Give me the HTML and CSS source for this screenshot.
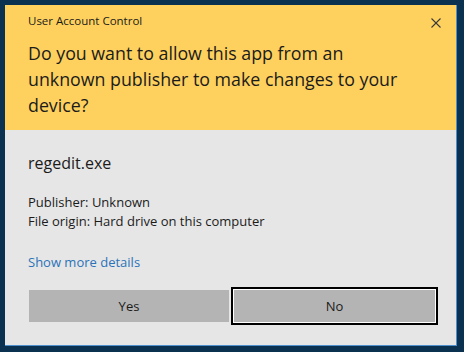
FILE: index.html
```html
<!DOCTYPE html>
<html lang="en">
<head>
    <meta charset="UTF-8">
    <meta name="viewport" content="width=device-width, initial-scale=1.0">
    <title>User Account Control</title>
    <link rel="stylesheet" href="styles.css">
</head>
<body>
    <div class="uac-dialog">
        <div class="uac-header">
            <div class="title-row">
                <span class="caption">User Account Control</span>
                <div class="close-btn">
                    <svg viewBox="0 0 10 10">
                        <line x1="0.5" y1="0.5" x2="9.5" y2="9.5"></line>
                        <line x1="9.5" y1="0.5" x2="0.5" y2="9.5"></line>
                    </svg>
                </div>
            </div>
            <h1 class="question">Do you want to allow this app from an<br>unknown publisher to make changes to your<br>device?</h1>
        </div>
        <div class="uac-body">
            <div class="app-name">regedit.exe</div>
            <div class="app-info">
                <div>Publisher: Unknown</div>
                <div>File origin: Hard drive on this computer</div>
            </div>
            <a class="details-link" href="#">Show more details</a>
            <div class="buttons">
                <button class="btn">Yes</button>
                <button class="btn focused">No</button>
            </div>
        </div>
    </div>
</body>
</html>
```

FILE: styles.css
```css
body {
    font-family: "Open Sans", "Noto Sans", sans-serif;
    margin: 0;
    background-color: #0b3150;
    width: 464px;
    height: 352px;
    overflow: hidden;
}

.uac-dialog {
    margin: 5px 0 0 5px;
    width: 451px;
    height: 340px;
    border-right: 1px solid #4d8fcc;
    border-bottom: 1px solid #4d8fcc;
    display: flex;
    flex-direction: column;
    color: #1b1b1b;
}

.uac-header {
    background-color: #fed15e;
    height: 125px;
    box-sizing: border-box;
    padding: 8px 0 0 23px;
}

.title-row {
    display: flex;
    justify-content: space-between;
    align-items: center;
    height: 16px;
}

.caption {
    font-size: 11.5px;
    line-height: 16px;
}

.close-btn {
    width: 10px;
    height: 10px;
    margin-right: 15px;
    margin-top: 3px;
}

.close-btn svg {
    display: block;
    width: 10px;
    height: 10px;
    stroke: #3a3a3a;
    stroke-width: 1.1px;
}

.question {
    margin: 11px 0 0 0;
    font-size: 17.8px;
    font-weight: normal;
    line-height: 26px;
    white-space: nowrap;
}

.uac-body {
    flex: 1;
    background-color: #e6e6e6;
    padding: 22px 21px 0 23px;
}

.app-name {
    font-size: 16px;
    line-height: 22px;
}

.app-info {
    margin-top: 19px;
    font-size: 13px;
    line-height: 19px;
}

.details-link {
    display: block;
    margin-top: 22px;
    font-size: 13px;
    line-height: 19px;
    color: #2b73b9;
    text-decoration: none;
}

.buttons {
    display: grid;
    grid-template-columns: 200px 201px;
    gap: 5px;
    margin: 18px 0 0 1px;
}

.btn {
    height: 32px;
    border: none;
    background-color: #b4b4b4;
    font-family: inherit;
    font-size: 13px;
    color: #1b1b1b;
    padding: 0;
}

.focused {
    box-shadow: 0 0 0 1px #ffffff, 0 0 0 3px #000000;
}
```
